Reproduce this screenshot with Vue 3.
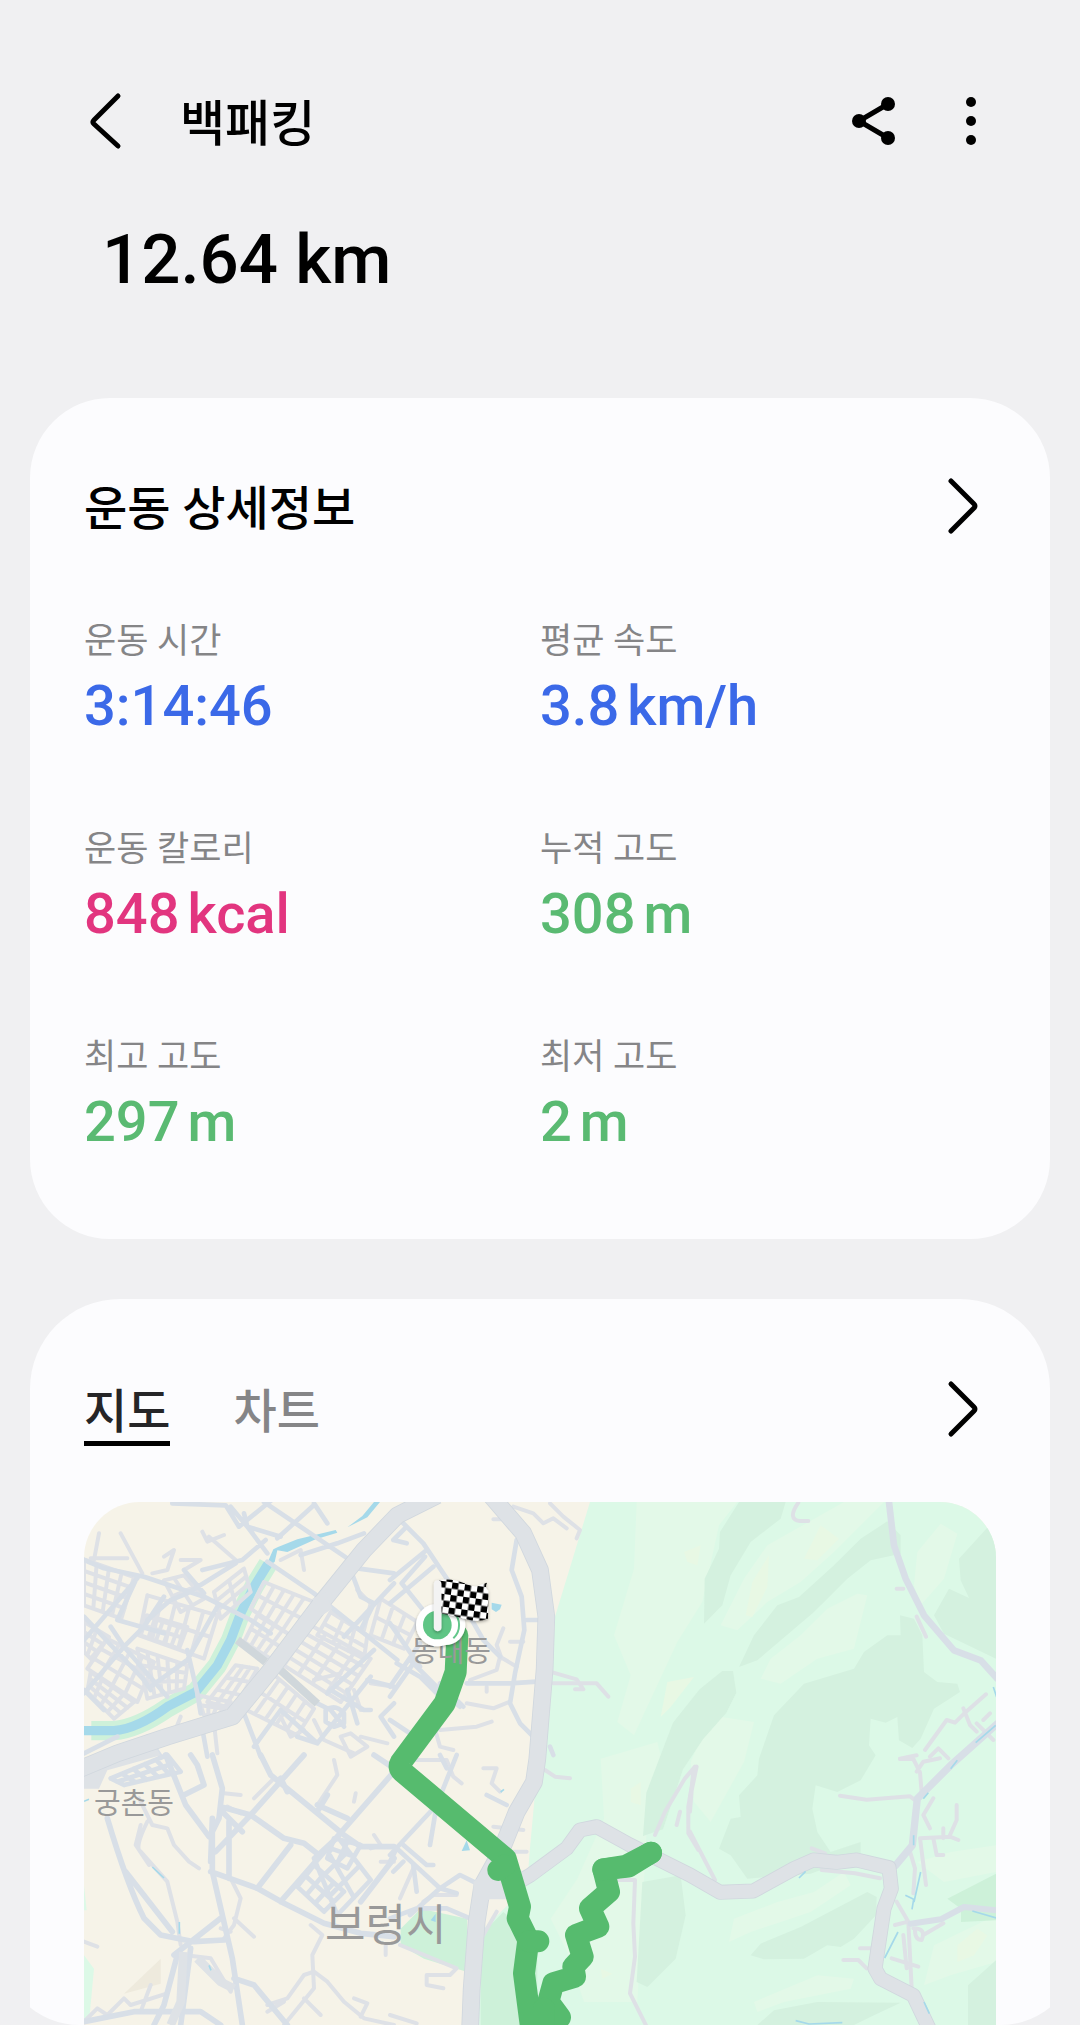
<script setup>
import { ref } from 'vue'

const distance = '12.64 km'
const metrics = [
  { label: '운동 시간', value: '3:14:46', unit: '', tone: 'blue' },
  { label: '평균 속도', value: '3.8', unit: 'km/h', tone: 'blue' },
  { label: '운동 칼로리', value: '848', unit: 'kcal', tone: 'pink' },
  { label: '누적 고도', value: '308', unit: 'm', tone: 'green' },
  { label: '최고 고도', value: '297', unit: 'm', tone: 'green' },
  { label: '최저 고도', value: '2', unit: 'm', tone: 'green' },
]
const tabs = ['지도', '차트']
const active = ref('지도')

// Builds a street grid between four corners: n lines one way, m the other.
function grid([ax, ay, bx, by, cx, cy, dx, dy, n, m]) {
  const mix = (p, q, t) => Math.round(p + (q - p) * t)
  let d = ''
  for (let i = 0; i <= n; i++) {
    const t = i / n
    d += `M${mix(ax, bx, t)} ${mix(ay, by, t)}L${mix(dx, cx, t)} ${mix(dy, cy, t)}`
  }
  for (let i = 0; i <= m; i++) {
    const t = i / m
    d += `M${mix(ax, dx, t)} ${mix(ay, dy, t)}L${mix(bx, cx, t)} ${mix(by, cy, t)}`
  }
  return d
}

const blocks = [
  [0, 172, 150, 225, 112, 350, 0, 310, 4, 4],
  [190, 280, 400, 340, 360, 470, 165, 400, 5, 2],
  [190, 340, 310, 375, 285, 440, 170, 400, 5, 2],
  [0, 360, 75, 405, 20, 470, 0, 450, 2, 3],
  [70, 410, 210, 480, 160, 600, 10, 500, 4, 3],
  [20, 510, 150, 600, 90, 650, 10, 570, 4, 3],
  [160, 440, 310, 490, 300, 560, 190, 590, 5, 3],
  [240, 235, 300, 220, 360, 290, 290, 330, 2, 2],
  [390, 270, 480, 200, 500, 270, 410, 350, 2, 3],
  [540, 240, 690, 300, 620, 400, 500, 320, 5, 2],
  [520, 340, 620, 400, 560, 470, 480, 420, 4, 2],
  [680, 370, 860, 470, 770, 600, 600, 490, 4, 5],
  [740, 330, 850, 400, 840, 470, 700, 400, 3, 2],
  [560, 510, 690, 620, 640, 700, 480, 620, 5, 2],
  [455, 490, 520, 500, 450, 620, 370, 600, 3, 3],
  [340, 580, 440, 600, 400, 640, 360, 640, 3, 2],
  [890, 290, 1000, 360, 960, 440, 860, 400, 3, 2],
].map(grid).join('')

const lowerBlocks = [
  [690, 310, 760, 245, 860, 375, 760, 480, 2, 3],
  [640, 395, 690, 330, 780, 410, 720, 470, 2, 3],
  [750, 250, 830, 270, 790, 340, 730, 310, 2, 2],
  [80, 70, 250, 0, 290, 50, 120, 90, 5, 2],
].map(grid).join('')

const route = 'M1120 400L1115 510L1082 604L950 782Q942 796 954 808L1265 1070L1308 1214L1301 1249L1333 1314L1320 1414L1343 1590'
const branch = 'M1343 1580L1428 1546L1393 1499L1408 1444L1473 1424L1468 1394L1496 1364L1476 1299L1543 1274L1518 1219L1575 1169L1558 1102L1633 1094L1701 1052'
</script>

<template>
  <main class="screen">
    <header class="bar">
      <button class="icon" type="button" aria-label="뒤로">
        <svg viewBox="0 0 64 64"><path class="line" d="M42 6 18 30q-2 2 0 4l24 22" /></svg>
      </button>
      <h1>백패킹</h1>
      <button class="icon push" type="button" aria-label="공유">
        <svg viewBox="0 0 64 64">
          <path class="link" d="M46 14 17 31l29 17" />
          <circle cx="46" cy="14" r="7" /><circle cx="17" cy="31" r="7" /><circle cx="46" cy="48" r="7" />
        </svg>
      </button>
      <button class="icon" type="button" aria-label="더보기">
        <svg viewBox="0 0 64 64">
          <circle cx="31" cy="12" r="5" /><circle cx="31" cy="31" r="5" /><circle cx="31" cy="50" r="5" />
        </svg>
      </button>
    </header>
    <p class="distance">{{ distance }}</p>

    <section class="card details">
      <div class="head">
        <h2>운동 상세정보</h2>
        <button class="icon" type="button" aria-label="운동 상세정보 열기">
          <svg viewBox="0 0 64 64"><path class="line" d="M19 7 42 30q2 2 0 4L19 57" /></svg>
        </button>
      </div>
      <dl class="metrics">
        <div v-for="m in metrics" :key="m.label">
          <dt>{{ m.label }}</dt>
          <dd :class="m.tone"><span>{{ m.value }}</span><span v-if="m.unit">{{ m.unit }}</span></dd>
        </div>
      </dl>
    </section>

    <section class="card track">
      <div class="head">
        <div class="tabs" role="tablist">
          <button
            v-for="t in tabs"
            :key="t"
            type="button"
            role="tab"
            :aria-selected="active === t"
            :class="{ on: active === t }"
            @click="active = t"
          >{{ t }}</button>
        </div>
        <button class="icon" type="button" aria-label="지도 열기">
          <svg viewBox="0 0 64 64"><path class="line" d="M19 7 42 30q2 2 0 4L19 57" /></svg>
        </button>
      </div>

      <svg class="map" viewBox="0 0 912 523" preserveAspectRatio="xMidYMin slice" role="img" aria-label="이동 경로 지도">
        <defs>
          <pattern id="checks" width="38" height="38" patternUnits="userSpaceOnUse" patternTransform="translate(150 272) rotate(8)">
            <rect width="38" height="38" fill="#fff" />
            <path d="M0 0h19v19H0zM19 19h19v19H19z" fill="#000" />
          </pattern>
          <filter id="shade" x="-20%" y="-20%" width="140%" height="150%">
            <feDropShadow dx="0" dy="4" stdDeviation="4" flood-opacity=".35" />
          </filter>
        </defs>
        <g transform="scale(.33333)">
          <rect width="2740" height="1572" fill="#f6f3e8" />
          <path fill="#dcf9e7" d="M1518 0 1413 344 1400 600 1358 819 1336 1060 1330 1150 1180 1300V1572H2740V0zM0 1360l30 40-15 160H0zM0 1150l8 75H0z" />

          <g class="light">
            <path d="M1658 0H1960L1905 70 1855 300 1780 420 1650 700 1600 660 1640 520 1590 400 1650 200z" />
            <path d="M2280 0H2400L2250 150 2150 240 2050 300 1960 385 1910 370 1980 230 2050 130z" />
            <path d="M2030 530 2060 470 2150 400 2230 320 2320 275 2350 280 2320 400 2310 440 2200 470 2090 545z" />
            <path d="M2490 250 2500 150 2570 65 2620 95 2580 230 2510 310z" />
            <path d="M1550 770 1720 720 1740 800 1690 950 1660 1500 1500 1500 1450 1350 1400 1250 1480 1130 1560 950z" />
            <path d="M1820 780 1880 640 2010 660 1980 780 1880 960 1830 900z" />
            <path d="M1935 1320 1950 1250 2080 1200 2190 1170 2280 1110 2300 1150 2180 1230 2000 1290z" />
            <path d="M2010 1500 2200 1420 2310 1430 2300 1460 2100 1500 2020 1530zM2520 1450 2550 1330 2736 1240 2736 1380 2600 1420zM2500 1080 2600 1050 2736 1030 2736 1110 2580 1140z" />
          </g>
          <g class="forest">
            <path d="M1965 0H2105L2090 50 2000 120 1940 220 1915 310 1860 365 1862 230 1905 140 1908 90z" />
            <path d="M2410 58 2450 100V155L2360 175 2290 230 2190 330 2020 475 1965 495 2010 400 2080 310 2145 285 2250 190 2330 110z" />
            <path d="M2730 55 2625 170 2630 235 2655 288 2595 260 2550 340 2580 395 2736 470V55z" />
            <path d="M1915 507h32l10 65-30 60-70 80-60 90-60 180-60 20 10-130 80-210 80-100z" />
            <path d="M2448 340 2490 350 2515 400 2520 510 2560 540 2620 545 2628 570 2550 620 2510 710 2485 738 2445 715 2440 645 2405 662 2360 650 2355 730 2375 760 2330 835 2260 870 2195 850 2185 920 2200 990 2240 1050 2330 1020 2330 1060 2180 1115 1990 1130 1940 1060 1905 1040 1940 950 1970 945 1965 880 2020 820 2025 770 2070 640 2160 545 2310 500 2340 450 2410 400 2450 400z" />
            <path d="M1675 1140 1790 1120 1805 1240 1775 1370 1690 1455 1658 1440z" />
            <path d="M2350 1170 2378 1185 2376 1240 2310 1310 2270 1335 2230 1330 2160 1370 2040 1372 2000 1360 2030 1325 2150 1275z" />
            <path d="M2020 1569 2070 1525 2200 1500 2450 1502 2370 1540 2310 1569zM2652 1450 2736 1375V1572H2652z" />
          </g>
          <path class="park" d="M1258 1230 1190 1300V1572H1360V1300L1270 1240zM950 1280l60-60 140 30v160l-130-40-70-40zM2590 1190l146-75v140l-105 5v-40z" />
          <path class="yellow" d="M2055 160l-50 80-20 100 20 5 45-90zM2210 70l-50 100 40 5 65-65zM1800 150l50-20-10 60-30-10zM1640 860l30-20v70l-30-10zM1750 540l80-15-70 90-30 30zM1550 1400l35 15-30 15zM2620 1330l60-50 30 20-40 60-50 20z" />
          <path fill="#eeeadd" d="M230 1370v75l-110 30z" />

          <!-- river -->
          <path class="bank" d="M22 686H90Q160 680 250 618L335 570 400 490 440 414 470 334 510 254 552 186" />
          <path class="river" d="M0 686H90Q160 680 250 614L335 570 400 490 440 414 470 334 510 254 552 186" />
          <path fill="#a5d9ea" d="M545 195 568 142 582 135 640 112 755 84 760 92 695 112 610 150 580 145 572 180zM790 76 835 42 870 0H888L850 46z" />
          <path fill="#a5d9ea" d="M1223 302l30 6-5 14-12 8-13-8zM1133 1047l15-32 10 30zM1040 1255l15-20v25z" />

          <!-- village and hill lanes -->
          <g class="lane">
            <path :d="blocks" />
            <g transform="translate(0 -36)">
              <path d="M30 210 45 130M20 205H130M110 130l65 120M240 200l30-20-20 60-45 10M290 210h60l-50 30M355 125l15 30 50-20M375 140l80 70M590 210l60-30 10 60M770 550l-80 20M690 690l30 60 90 40M770 740l30 60 50-30-50-40zM860 580l70 10M810 600l20 60h30M830 740l80 20M590 680l30 60 40-20M390 700l10 90M290 680l-20 50M820 300l40 40-20 80" />
            </g>
            <g transform="translate(918 -36)">
              <path d="M370 50l60 20 30 30 30-15 40 30M480 40l40 40 50 40-10 25M310 88h40M490 548l70 20 20 30h-25M490 580h130l35 40M340 415l-20 50 15 40M240 570l80-30 10-40 50 30M230 640l80 15 50-20M150 720l110-10 45-15M130 700l20 70 40 10M290 590v15M360 455h40" />
            </g>
            <g transform="translate(1818 -36)">
              <path d="M325 38q-35 50 5 55h25M680 380l28 60M620 296h20M705 780l65-90 25 8 25-25 68-60M820 655l20 50 20 20M630 806l50-10M720 800l25-25 30 30M880 690l20-20M860 700l50 50" />
            </g>
            <g transform="translate(0 759)">
              <path d="M190 200q-40 80-20 90l80 90 30 120 10 70M165 130l40 80 45 10 20 50 45 50 30 20M170 210l-15 60 40 60M450 490l60 55M440 370l30 60-20 80-30 40M300 600l80 10 60 100M350 610l70 70M0 800l40-40 30 20 50-50 20 20 110-35M170 770l30-80M680 510l35 30-30 60 5 100-90 110M550 750l60-20 50-70 30-10 40 30 50 60 60 50 90 20M600 740l-50 30M660 730l50 50M810 730l40 15-20 40M750 15l10 45-60 90M810 140l5-25M870 240l20 30-30 10M890 320h40M410 520l30 10M0 560l40 15M905 570v30M420 115l50 5M430 155l40 20M510 130l60-60" />
            </g>
            <g transform="translate(918 759)">
              <path d="M60 15h110l20 50 25 20M280 40h40l-15 45 25 25M465 45l30 20 45 5M310 215l90 10M360 290h50M680 375h55l-5 130 5 100-15 110 50 100M795 240l30-70 60-100 30-35-20 120v80l30 50M860 210l10-40M30 570l170 70-20 20h-70v30l50 10M280 540l40-70M100 440l30-20h70M30 430l40-90M0 780l80 25" />
            </g>
            <g transform="translate(1818 759)">
              <path d="M0 170 10 45 20 35 0 130M0 230 75 375M450 122l80 12 130-10 20 15M630 12h40l20 40 5 60M680 50l20-30 50-10M690 250l90-5 25 10M800 150v45l-20 45M760 220v30M730 250l10 50h20M660 290l15 50-5 75M690 250l18 140M730 130l-30 50 20 40M365 280l40 15M395 345l100 10 75 15M620 440l35 60-40 10M655 500l10 200M640 540l10 100M605 610l80 25M510 580h40M460 615h45l25 25M700 540l60-35M670 520q40 0 25 35-20 0-20-30" />
            </g>
          </g>

          <!-- town streets -->
          <g class="street">
            <path :d="lowerBlocks" transform="translate(0 759)" />
            <g transform="translate(0 -36)">
              <path d="M265 40 425 46 465 110 600 0M480 70l10 40 60 80M440 50l50 60 100 30M540 36 790 205 M580 145l110-100M690 40l40 60M0 210 60 235 180 260 360 320 500 390 560 430M355 240l120-30 70-60M455 220 310 310 260 330 190 390M300 240l60 70M550 215 690 310M650 195l110-35 80-30M0 450 160 265M160 260l-60 130 140 40M0 380 180 570 200 600M240 320l-60 90-60 60L0 610M310 480l30 130 10 60M0 600l60 60M80 410l40 60 130 150M400 350l-90 160-110 80M690 310l250 200M820 235l110 15M800 240l30 80 40 20-40 80M930 280 780 440M860 560 700 760 640 740M870 480l-140 130M740 600l100 60h20M700 640l40 20 40 50M725 660q30-20 55 10v30l-30 10-25-15zM350 690l20 110M480 670l50 130M700 760l-110-100-80 110M850 570l80 20M930 640l-40 40 40 60M0 790l100-50M190 740l40 60M790 600l30 100" />
            </g>
            <g transform="translate(918 -36)">
              <path d="M30 90l70 70 100 150 80 140 50 50M380 150l-15 90 30 80 8 100-28 130-15 90 30 60 50 50M0 270l110-90M50 110l-40 40 40 10M105 200l-70 80 80 100M130 230 0 340M0 400l90 130M90 460 0 590M60 510l100 100 50 40M20 520l70 40 60 60M410 390h35M0 620l70-100M230 580h130l80-5M220 650l-70-70M0 690l90 60M480 770l10 25" />
            </g>
            <g transform="translate(0 759)">
              <path stroke-width="17" d="M70 190q60 200 110 300l50 50 100 20 90-5M385 0l30 100-10 90 -20 40v120l60 260 30 200M385 190l-5 130M660 0 500 180 395 290M530 0l30 60 220 180 50 35h100M410 155l90 25 100 70 60 15 45 35M380 350l140 50 80 45 120 60 110 30 100 10M930 50 590 440M620 270l-100 130M320 0l20 30 20 60-60 30M245 0l60 150 70 95M415 170l60 60M435 200v170M410 490 270 600M280 600l-40 150-30 60M320 580l-30 230M125 350l140 180M450 670l60 20 100 120M930 310l-100 130M700 150l90 40M730 120l-30 50M0 800l150-30h200l60 40M590 70l20 40M870 0l60 40" />
            </g>
            <g transform="translate(918 759)">
              <path d="M0 300 140 150 200 0M0 320l20-40 130 120 60-40 40 20M40 270l70 60h20M140 150l-20 120M10 350l30-30M70 330l10 80M60 480l90-80 50 15M290 120l60 30M150 0l20 40M0 490l80-30h90l70 30" />
            </g>
            <path stroke-width="20" d="M2415 0 2430 130 2465 230 2520 340 2610 445 2690 475 2740 530" />
            <path stroke-width="22" d="M2740 665 2600 790 2500 890 2485 1030 2435 1090" />
            <path stroke-width="18" d="M2480 1265 2570 1252 2640 1215 2740 1225" />
          </g>
          <path fill="none" stroke="#d0d7db" stroke-width="24" d="M460 414 545 480M590 505 700 605" />
          <path fill="#dee2e6" d="M0 790 200 710 230 760 70 805 45 860 0 860z" />
          <path fill="none" stroke="#dee2e6" stroke-width="26" d="M298 1350 290 1500 260 1569M340 1370l70 70 40 20" />

          <path class="edge" d="M1060 -20 940 40 840 144 715 299 560 504 445 644 250 704 100 754-10 800" />
          <path class="edge" d="M1220 -20 1318 94 1368 204 1387 344 1382 500 1360 770 1350 840 1298 930 1250 1050 1195 1150 1178 1260 1163 1460 1158 1590" />
          <path class="edge thin" d="M1190 1165H1260L1338 1120 1448 1039 1488 984 1538 974 1638 1029 1818 1119 1908 1171 2008 1167 2130 1100 2188 1074 2258 1081 2318 1074 2415 1097 2422 1160 2400 1220 2373 1400 2390 1430 2488 1480 2540 1590" />
          <path class="road" d="M1060 -20 940 40 840 144 715 299 560 504 445 644 250 704 100 754-10 800" />
          <path class="road" d="M1220 -20 1318 94 1368 204 1387 344 1382 500 1360 770 1350 840 1298 930 1250 1050 1195 1150 1178 1260 1163 1460 1158 1590" />
          <path class="road thin" d="M1190 1165H1260L1338 1120 1448 1039 1488 984 1538 974 1638 1029 1818 1119 1908 1171 2008 1167 2130 1100 2188 1074 2258 1081 2318 1074 2415 1097 2422 1160 2400 1220 2373 1400 2390 1430 2488 1480 2540 1590" />
          <path fill="#dee2e6" d="M1168 1140l90-80 70 60-30 72h-80l-48 20zM685 290l40-20 20 50-30 20z" />

          <path class="brook" d="M205 1095l35 33M286 1260v35M375 1390l6 15M0 898l15-6M2675 722l60-52M2728 555l10 30M2600 800l20-25M2518 890l15-18M2489 1000v30M2510 1110l-20 90M2464 1180l25 12-5 30M2402 1368l40-78M2665 1227l75 22M2520 1500l16 35M2145 1128l20-20M2135 1556l40 10 100-4M1250 870l10-8" />

          <!-- recorded track -->
          <g class="route">
            <path :d="branch" />
            <path :d="route" />
            <path d="M1243 1104 1262 1090M1335 1318h28M1380 1520v40M1558 1102 1625 1092 1701 1052" />
          </g>
        </g>

        <text class="place" x="327" y="160" font-size="29">동대동</text>
        <text class="place" x="10" y="312" font-size="29">궁촌동</text>
        <text class="place" x="241" y="439" font-size="44">보령시</text>

        <g transform="scale(.33333) translate(918 -36)">
          <g filter="url(#shade)">
            <circle cx="166" cy="405" r="60" fill="#fff" />
            <circle cx="142" cy="405" r="64" fill="#fff" />
          </g>
          <path d="M190 365a55 55 0 0 1 0 80" fill="none" stroke="#63c78b" stroke-width="6" />
          <circle cx="142" cy="405" r="43" fill="#5fc585" />
          <g filter="url(#shade)">
            <path fill="url(#checks)" d="M148 270q40-6 75 10t50 4l18-6q-8 16 4 24l-1 84q-30 12-70 0t-76-16z" />
            <path d="M143 282V412" stroke="#f3f3f3" stroke-width="23" stroke-linecap="round" />
          </g>
        </g>
      </svg>
    </section>
  </main>
</template>

<style>
body {
  margin: 0;
  background: #f0f0f2;
}
</style>

<style scoped>
.screen {
  box-sizing: border-box;
  padding: 90px 30px 0;
  overflow: hidden;
  border-radius: 0 0 80px 80px;
  background: #f0f0f2;
  color: #000;
  font-family: Roboto, "Noto Sans CJK KR", sans-serif;
}
button {
  padding: 0;
  border: 0;
  background: none;
  color: inherit;
  font: inherit;
  cursor: pointer;
}
h1, h2, p, dl, dd {
  margin: 0;
}
h1, h2 {
  padding-top: 6px;
  font-size: 47px;
  font-weight: 500;
  line-height: 58px;
}
.icon {
  flex: none;
  width: 64px;
  height: 64px;
}
.icon svg {
  display: block;
  width: 64px;
  height: 64px;
}
.line {
  fill: none;
  stroke: #000;
  stroke-width: 5;
  stroke-linecap: round;
}
.link {
  fill: none;
  stroke: #000;
  stroke-width: 5;
}
.bar {
  display: flex;
  align-items: center;
  gap: 34px;
  padding: 0 46px;
}
.bar h1 {
  padding-left: 6px;
  font-size: 49px;
}
.push {
  margin-left: auto;
}
.distance {
  margin: 66px 72px 98px;
  font-size: 69px;
  font-weight: 500;
  line-height: 80px;
}
.card {
  padding: 76px 54px 83px;
  border-radius: 80px;
  background: #fcfcfe;
}
.head {
  display: flex;
  align-items: flex-start;
  justify-content: space-between;
}
.metrics {
  display: grid;
  grid-template-columns: 1fr 1fr;
  row-gap: 86px;
  margin-top: 80px;
}
dt {
  color: #858587;
  font-size: 35px;
  line-height: 48px;
}
dd {
  display: flex;
  gap: 8px;
  margin-top: 6px;
  font-size: 56px;
  font-weight: 500;
  line-height: 68px;
}
.blue { color: #3b69e8; }
.pink { color: #e2357f; }
.green { color: #5aba72; }
.track {
  margin-top: 60px;
  padding: 78px 54px 0;
  border-radius: 90px 90px 0 0;
}
.tabs {
  display: flex;
  gap: 63px;
}
.tabs button {
  padding-top: 6px;
  border-bottom: 5px solid transparent;
  color: #858587;
  font-size: 47px;
  font-weight: 500;
  line-height: 58px;
}
.tabs .on {
  border-color: #000;
  color: #252527;
}
.map {
  display: block;
  width: 100%;
  height: 523px;
  margin-top: 56px;
  border-radius: 56px 56px 0 0;
}
.map path {
  stroke-linejoin: round;
}
.light { fill: #e3f9e8; }
.forest { fill: #d4f1df; }
.park { fill: #cdf1d9; }
.yellow { fill: #e8f8e4; }
.bank, .river, .lane, .street, .edge, .road, .brook, .route {
  fill: none;
}
.bank { stroke: #cef1da; stroke-width: 58; }
.river { stroke: #a5d9ea; stroke-width: 28; }
.lane { stroke: #dee1e6; stroke-width: 12; stroke-linecap: round; }
.street { stroke: #d8dfe7; stroke-width: 14; stroke-linecap: round; }
.edge { stroke: #d0d7de; stroke-width: 53; }
.road { stroke: #dee2e6; stroke-width: 48; }
.edge.thin { stroke-width: 45; }
.road.thin { stroke-width: 40; }
.brook { stroke: #a5d9ea; stroke-width: 5; }
.route { stroke: #56bb6e; stroke-width: 66; stroke-linecap: round; }
.place {
  fill: #999;
  font-family: "Noto Sans CJK KR", sans-serif;
}
</style>
